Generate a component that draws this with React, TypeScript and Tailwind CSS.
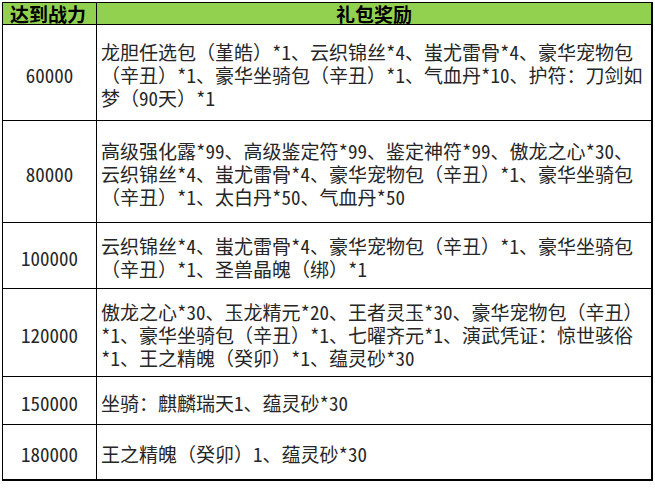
const rows: { power: string; lines: string[]; h: string }[] = [
  {
    power: "60000",
    h: "h-[96px]",
    lines: [
      "龙胆任选包（堇皓）*1、云织锦丝*4、蚩尤雷骨*4、豪华宠物包",
      "（辛丑）*1、豪华坐骑包（辛丑）*1、气血丹*10、护符：刀剑如",
      "梦（90天）*1",
    ],
  },
  {
    power: "80000",
    h: "h-[102px]",
    lines: [
      "高级强化露*99、高级鉴定符*99、鉴定神符*99、傲龙之心*30、",
      "云织锦丝*4、蚩尤雷骨*4、豪华宠物包（辛丑）*1、豪华坐骑包",
      "（辛丑）*1、太白丹*50、气血丹*50",
    ],
  },
  {
    power: "100000",
    h: "h-[66px]",
    lines: [
      "云织锦丝*4、蚩尤雷骨*4、豪华宠物包（辛丑）*1、豪华坐骑包",
      "（辛丑）*1、圣兽晶魄（绑）*1",
    ],
  },
  {
    power: "120000",
    h: "h-[88px]",
    lines: [
      "傲龙之心*30、玉龙精元*20、王者灵玉*30、豪华宠物包（辛丑）",
      "*1、豪华坐骑包（辛丑）*1、七曜齐元*1、演武凭证：惊世骇俗",
      "*1、王之精魄（癸卯）*1、蕴灵砂*30",
    ],
  },
  {
    power: "150000",
    h: "h-[48px]",
    lines: ["坐骑：麒麟瑞天1、蕴灵砂*30"],
  },
  {
    power: "180000",
    h: "h-[56px]",
    lines: ["王之精魄（癸卯）1、蕴灵砂*30"],
  },
];

export default function App() {
  return (
    <div className="min-h-[489px] w-[655px] bg-white pl-[2px] pt-[2px] font-['Noto_Sans_Mono_CJK_SC','Noto_Sans_CJK_SC',sans-serif] text-[19px] text-[#262626]">
      <div className="grid w-[651px] grid-cols-[94px_556px] border-l border-t border-black">
        {/* header */}
        <div className="flex h-[22px] items-center border-b border-r border-black bg-[#92d050] pl-[7px] font-bold leading-none text-black">
          达到战力
        </div>
        <div className="flex h-[22px] items-center justify-center border-b border-r-2 border-black bg-[#92d050] font-bold leading-none text-black">
          礼包奖励
        </div>

        {rows.map((r, i) => (
          <div key={r.power} className="contents">
            <div
              className={`flex ${r.h} items-center justify-center border-r border-black pt-[3px] leading-[23px] ${
                i === rows.length - 1 ? "border-b-2" : "border-b"
              }`}
            >
              {r.power}
            </div>
            <div
              className={`flex ${r.h} flex-col justify-center border-r-2 border-black pl-[4px] pt-[3px] leading-[23px] ${
                i === rows.length - 1 ? "border-b-2" : "border-b"
              }`}
            >
              {r.lines.map((l) => (
                <div key={l} className="whitespace-nowrap">
                  {l}
                </div>
              ))}
            </div>
          </div>
        ))}
      </div>
    </div>
  );
}
